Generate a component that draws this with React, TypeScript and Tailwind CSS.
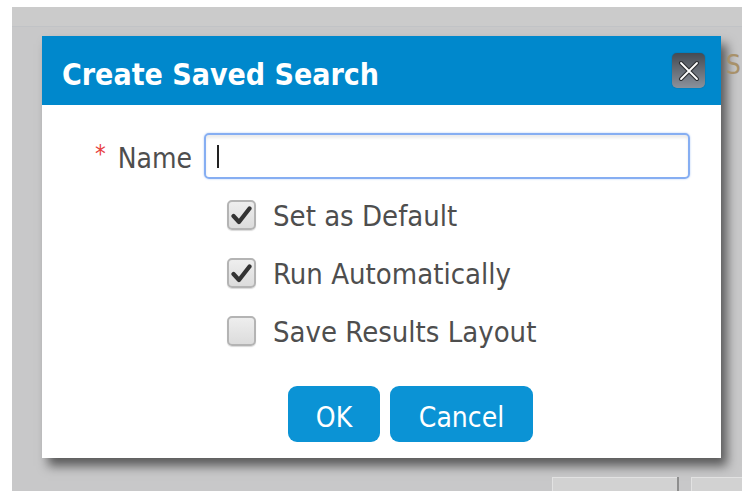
import React from "react";

const FONT = '"DejaVu Sans Condensed", "Liberation Sans", Tahoma, sans-serif';

function CloseButton() {
  return (
    <button
      type="button"
      className="w-[33px] h-[35px] rounded-[5px] flex items-center justify-center bg-[linear-gradient(to_bottom,#454b53,#8b919b)] shadow-[0_0_1px_rgba(0,0,0,0.5)]"
    >
      <svg width="24" height="24" viewBox="0 0 24 24">
        <path d="M4 4 L20 20 M20 4 L4 20" stroke="#2a2d31" strokeWidth="4" strokeLinecap="round" />
        <path d="M4 4 L20 20 M20 4 L4 20" stroke="#ffffff" strokeWidth="1.8" strokeLinecap="round" />
      </svg>
    </button>
  );
}

function Check({ checked, label }: { checked: boolean; label: string }) {
  return (
    <label className="flex items-center h-[30px]">
      <span className="w-[29px] h-[30px] rounded-[5px] border-2 border-[#b4b4b4] bg-[linear-gradient(to_bottom,#eeeeee,#dcdcdc)] flex items-center justify-center shadow-[0_1px_1px_rgba(0,0,0,0.15)]">
        {checked && (
          <svg width="21" height="19" viewBox="0 0 21 19">
            <path
              d="M2.5 10 L8 16 L18.5 2.5"
              fill="none"
              stroke="#333333"
              strokeWidth="4.2"
              strokeLinecap="round"
              strokeLinejoin="round"
            />
          </svg>
        )}
      </span>
      <span className="ml-[17px] text-[29px] leading-none text-[#4e4e4e] pt-[2px]">{label}</span>
    </label>
  );
}

function Dialog() {
  return (
    <div className="w-[679px] h-[422px] shrink-0 bg-white flex flex-col shadow-[6px_8px_10px_rgba(0,0,0,0.55)]">
      <div className="h-[69px] shrink-0 bg-[#0088cc] flex items-center justify-between pl-[20px] pr-[16px]">
        <span className="text-white font-bold text-[30px] leading-none pt-[8px]">Create Saved Search</span>
        <CloseButton />
      </div>
      <div className="flex flex-col pt-[28px]">
        <div className="flex items-center">
          <div className="w-[150px] flex justify-end items-center pt-[6px]">
            <span className="text-[#e8423f] text-[24px] leading-none mr-[12px] -mt-[10px]">*</span>
            <span className="text-[28px] leading-none text-[#4e4e4e]">Name</span>
          </div>
          <div className="ml-[12px] w-[486px] h-[46px] rounded-[5px] border-2 border-[#86aef2] shadow-[inset_0_3px_3px_rgba(0,0,0,0.08),0_0_2px_rgba(110,160,240,0.6)] flex items-center pl-[11px]">
            <span className="w-[2px] h-[23px] bg-[#222]" />
          </div>
        </div>
        <div className="flex flex-col gap-[28px] pl-[185px] pt-[21px]">
          <Check checked label="Set as Default" />
          <Check checked label="Run Automatically" />
          <Check checked={false} label="Save Results Layout" />
        </div>
        <div className="flex gap-[10px] pl-[246px] pt-[40px]">
          <button
            type="button"
            className="w-[92px] h-[56px] rounded-[9px] bg-[#0b93d5] text-white text-[28px] leading-none pt-[8px]"
          >
            OK
          </button>
          <button
            type="button"
            className="w-[143px] h-[56px] rounded-[9px] bg-[#0b93d5] text-white text-[28px] leading-none pt-[8px]"
          >
            Cancel
          </button>
        </div>
      </div>
    </div>
  );
}

export default function App() {
  return (
    <div
      className="w-[742px] h-[491px] bg-white pt-[7px] pl-[12px] overflow-hidden"
      style={{ fontFamily: FONT }}
    >
      <div className="h-full bg-[#c8c8c9] flex flex-col overflow-hidden">
        <div className="h-[20px] shrink-0 bg-[#cbcbcb] border-b border-[#c1c3c6]" />
        <div className="flex pl-[30px] pt-[9px]">
          <Dialog />
          <div className="ml-[5px] pt-[16px] text-[26px] leading-none text-[#a8916a]">S</div>
        </div>
        <div className="flex pl-[540px] pt-[19px] items-start">
          <div className="w-[125px] h-[20px] shrink-0 bg-[#d2d2d2] border-t border-l border-[#e2e2e2]" />
          <div className="w-[2px] h-[20px] shrink-0 bg-[#8e8e8e]" />
          <div className="ml-[12px] w-[60px] h-[20px] shrink-0 bg-[#d2d2d2] border-t border-l border-[#e2e2e2]" />
        </div>
      </div>
    </div>
  );
}
